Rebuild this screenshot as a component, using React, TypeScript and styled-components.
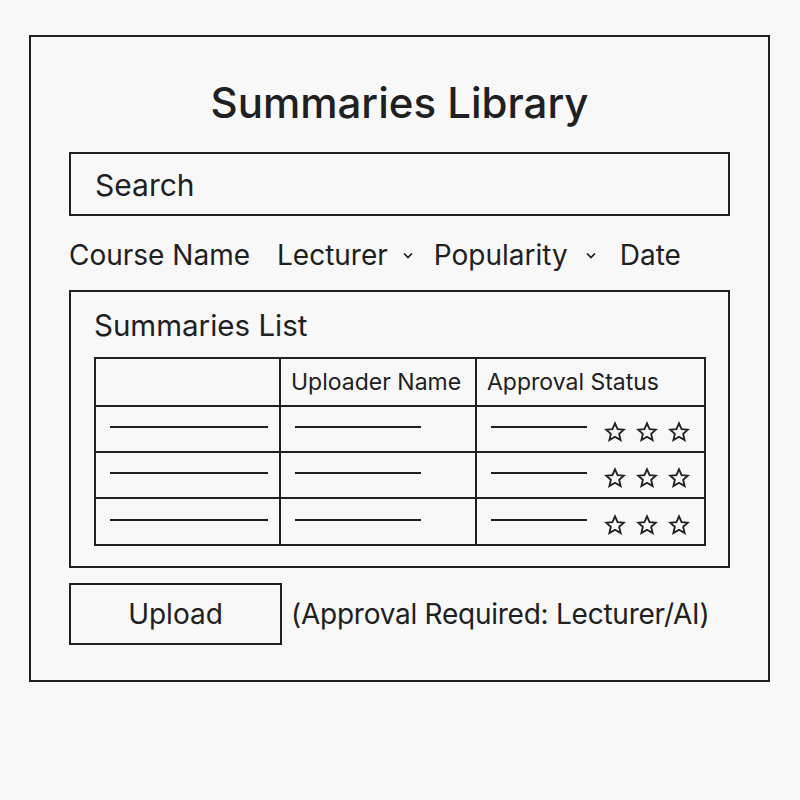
import styled, { createGlobalStyle } from 'styled-components';

const INK = '#1e2022';

const GlobalStyle = createGlobalStyle`
  html, body {
    margin: 0;
    padding: 0;
    background: #f8f8f8;
  }
  body {
    font-family: Inter, "Noto Sans", sans-serif;
    color: ${INK};
  }
`;

const Page = styled.div`
  width: 800px;
  height: 800px;
  padding: 35px 0 0 29px;
  box-sizing: border-box;
`;

const Frame = styled.div`
  width: 741px;
  height: 647px;
  box-sizing: border-box;
  border: 2px solid ${INK};
  padding: 0 38px;
  display: flex;
  flex-direction: column;
`;

const Title = styled.h1`
  margin: 38px 0 0;
  text-align: center;
  font-size: 42px;
  font-weight: 500;
  line-height: 56px;
`;

const SearchBox = styled.div`
  margin-top: 21px;
  height: 64px;
  box-sizing: border-box;
  border: 2px solid ${INK};
  display: flex;
  align-items: center;
  padding: 2px 0 0 24px;
  font-size: 30px;
`;

const FilterRow = styled.div`
  margin-top: 19px;
  display: flex;
  align-items: center;
  height: 40px;
  font-size: 28px;
`;

const Filter = styled.span<{ $gap: number }>`
  display: inline-flex;
  align-items: center;
  margin-right: ${(p) => p.$gap}px;
`;

const Chevron = styled.svg<{ $offset: number }>`
  margin-left: ${(p) => p.$offset}px;
  width: 10px;
  height: 7px;
`;

const Panel = styled.div`
  margin-top: 15px;
  height: 278px;
  box-sizing: border-box;
  border: 2px solid ${INK};
  padding: 14px 22px 0 23px;
`;

const PanelTitle = styled.h2`
  margin: 0;
  font-size: 29.5px;
  font-weight: 400;
  line-height: 38px;
`;

const Table = styled.div`
  margin-top: 13px;
  width: 612px;
  box-sizing: border-box;
  border: 2px solid ${INK};
  display: grid;
  grid-template-columns: 185px 196px 1fr;
`;

const Cell = styled.div<{ $head?: boolean; $last?: boolean; $lastRow?: boolean }>`
  height: ${(p) => (p.$head ? 48 : p.$lastRow ? 45 : 46)}px;
  box-sizing: border-box;
  border-right: ${(p) => (p.$last ? 'none' : `2px solid ${INK}`)};
  border-bottom: ${(p) => (p.$lastRow ? 'none' : `2px solid ${INK}`)};
  display: flex;
  align-items: center;
  padding-left: ${(p) => (p.$head ? 10 : 14)}px;
  font-size: 23px;
`;

const Dash = styled.div<{ $w: number }>`
  width: ${(p) => p.$w}px;
  height: 2px;
  background: ${INK};
  margin-top: -4px;
`;

const Stars = styled.div`
  display: flex;
  gap: 10px;
  margin-left: 17px;
  margin-top: 6px;
`;

const Star = styled.svg`
  width: 22px;
  height: 22px;
`;

const Footer = styled.div`
  margin-top: 15px;
  display: flex;
  align-items: center;
`;

const UploadButton = styled.button`
  width: 213px;
  height: 62px;
  box-sizing: border-box;
  border: 2px solid ${INK};
  background: transparent;
  font-family: inherit;
  font-size: 28px;
  color: ${INK};
  padding: 0;
`;

const Note = styled.span`
  margin-left: 9px;
  font-size: 28px;
  letter-spacing: -0.25px;
`;

const StarIcon = () => (
  <Star viewBox="0 0 24 24">
    <path
      d="M12 2.5l2.8 6.3 6.9.6-5.2 4.6 1.6 6.8L12 17.2l-6.1 3.6 1.6-6.8-5.2-4.6 6.9-.6z"
      fill="none"
      stroke={INK}
      strokeWidth="2"
      strokeLinejoin="miter"
    />
  </Star>
);

const ChevronIcon = ({ offset }: { offset: number }) => (
  <Chevron $offset={offset} viewBox="0 0 10 7">
    <polyline points="1,1.5 5,5.5 9,1.5" fill="none" stroke={INK} strokeWidth="1.7" />
  </Chevron>
);

const rows = [0, 1, 2];

export default function App() {
  return (
    <Page>
      <GlobalStyle />
      <Frame>
        <Title>Summaries Library</Title>
        <SearchBox>Search</SearchBox>
        <FilterRow>
          <Filter $gap={27}>Course Name</Filter>
          <Filter $gap={21}>
            Lecturer
            <ChevronIcon offset={15} />
          </Filter>
          <Filter $gap={24}>
            Popularity
            <ChevronIcon offset={18} />
          </Filter>
          <Filter $gap={0}>Date</Filter>
        </FilterRow>
        <Panel>
          <PanelTitle>Summaries List</PanelTitle>
          <Table>
            <Cell $head />
            <Cell $head>Uploader Name</Cell>
            <Cell $head $last>
              Approval Status
            </Cell>
            {rows.map((r) => [
              <Cell key={`a${r}`} $lastRow={r === 2}>
                <Dash $w={158} />
              </Cell>,
              <Cell key={`b${r}`} $lastRow={r === 2}>
                <Dash $w={126} />
              </Cell>,
              <Cell key={`c${r}`} $last $lastRow={r === 2}>
                <Dash $w={96} />
                <Stars>
                  <StarIcon />
                  <StarIcon />
                  <StarIcon />
                </Stars>
              </Cell>,
            ])}
          </Table>
        </Panel>
        <Footer>
          <UploadButton>Upload</UploadButton>
          <Note>(Approval Required: Lecturer/AI)</Note>
        </Footer>
      </Frame>
    </Page>
  );
}
